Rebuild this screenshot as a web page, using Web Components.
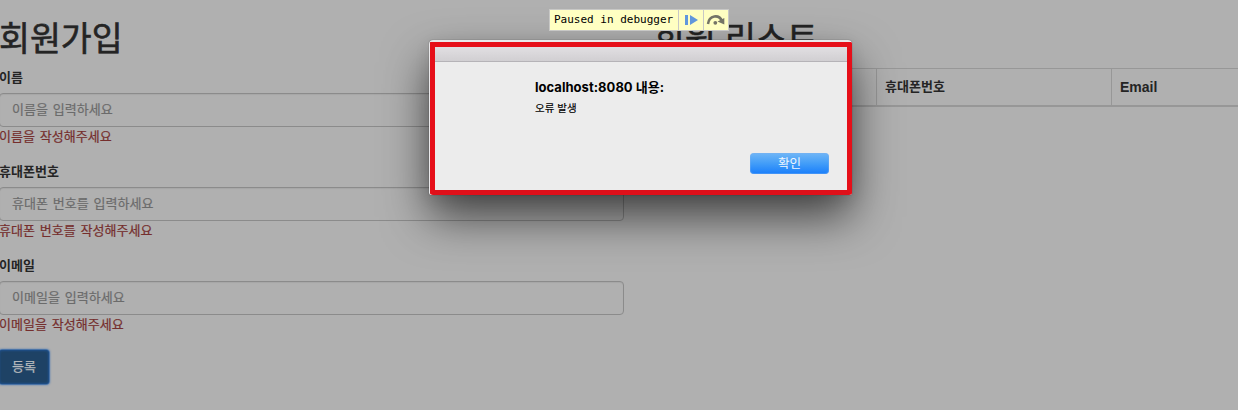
<!DOCTYPE html>
<html lang="ko">
<head>
<meta charset="utf-8">
<title>회원가입</title>
<style>
html,body{margin:0;height:100%;overflow:hidden;background:#b0b0b0}
body{font:13px/20px "Liberation Sans","Noto Sans CJK KR",sans-serif;color:#242424}
</style>
</head>
<body>
<member-page></member-page>
<script>
function define(name, html) {
  const t = document.createElement('template');
  t.innerHTML = html;
  customElements.define(name, class extends HTMLElement {
    constructor() {
      super();
      this.attachShadow({mode: 'open'}).appendChild(t.content.cloneNode(true));
    }
  });
}

define('page-heading', `<style>
:host{display:block;padding-top:20px;margin-bottom:8px}
h1{margin:0;font-weight:400;font-size:33.6px;line-height:40px;white-space:nowrap;color:#242424;-webkit-text-stroke:.6px #242424}
</style><h1><slot></slot></h1>`);

define('form-field', `<style>
:host{display:block;margin-bottom:15px}
.label{font-weight:700;line-height:20px;margin-bottom:5px;letter-spacing:.05px}
.box{box-sizing:border-box;height:34px;border:1px solid #8b8b8b;border-radius:4px;padding:6px 12px;color:#6b6b6b;box-shadow:inset 0 1px 1px rgba(0,0,0,.06);line-height:20px}
.error{color:#752e2d;line-height:20px}
.box,.error{letter-spacing:.05px;word-spacing:1px;-webkit-text-stroke:.2px currentColor}
</style><div class="label"><slot name="label"></slot></div><div class="box"><slot></slot></div><div class="error"><slot name="error"></slot></div>`);

define('submit-button', `<style>
:host{display:block}
button{display:block;box-sizing:border-box;width:50px;height:34px;margin:0;padding:0 0 2px;border:1px solid #1d4b80;border-radius:3px;background:#1e4265;color:#b5b9bd;font:13px/18px "Noto Sans CJK KR",sans-serif;-webkit-text-stroke:.25px #b5b9bd;box-shadow:0 0 0 .5px #31639d,0 0 2px 1px #4877b2,inset 0 0 2px #20528a}
</style><button><slot></slot></button>`);

define('member-table', `<style>
:host{display:grid;grid-template-columns:223px 235px 168px;box-sizing:border-box;height:39px;border-top:1px solid #979797;border-bottom:2px solid #979797}
div{border-right:1px solid #979797;padding:8px;font-weight:700;line-height:20px;letter-spacing:.05px}
.latin{font-size:14px;letter-spacing:0}
</style><div></div><div><slot name="phone"></slot></div><div class="latin"><slot name="email"></slot></div>`);

define('debugger-bar', `<style>
:host{display:flex;box-sizing:border-box;height:22px;border:1px solid #c8c8c6;background:#ffffc2;color:#000}
span{font:11px/20px "DejaVu Sans Mono",monospace;padding:0 4px;width:128px;box-sizing:border-box;white-space:nowrap}
i{display:flex;border-left:1px solid #c8c8c6;width:24px}
svg{display:block}
</style><span><slot></slot></span>
<i><svg width="24" height="20" viewBox="0 0 24 20"><path d="M6 5h3v10H6zM11 5l8 5-8 5z" fill="#6197dc"/></svg></i>
<i><svg width="24" height="20" viewBox="0 0 24 20"><path d="M4 14C5 5 15 4 18 11" fill="none" stroke="#747466" stroke-width="2.5"/><path d="M13.5 11.5l6.8-3.5 0 6.5z" fill="#747466"/><circle cx="11.3" cy="12.8" r="1.9" fill="#747466"/></svg></i>`);

define('alert-dialog', `<style>
:host{display:block;box-sizing:border-box;width:423px;height:155px;padding-top:2px;border-radius:4px 4px 2px 2px;background:#e9e9eb;color:#000;box-shadow:0 0 1px rgba(0,0,0,.65),0 22px 46px rgba(0,0,0,.62),0 4px 16px rgba(0,0,0,.08)}
.frame{box-sizing:border-box;height:153px;margin-left:1px;border:5px solid #e60f19;border-bottom-color:#df101a;border-radius:1px 2px 3px 3px;background:#ececec;display:flex;flex-direction:column}
.bar{height:14px;flex:none;border-bottom:1px solid #b5b3b7;background:linear-gradient(#e1dfe2,#d1cfd2)}
.body{flex:1;display:flex;flex-direction:column;padding:15px 18px 16px 100px;white-space:nowrap}
b{font:700 13px/20px Inter,"Noto Sans CJK KR",sans-serif;letter-spacing:.03px}
p{margin:2px 0 0;font:10.5px/18px "Noto Sans CJK KR",sans-serif;-webkit-text-stroke:.15px #000}
button{align-self:flex-end;margin:auto 0 0;padding:0 0 1px;width:79px;height:21px;border:0;border-radius:4px;background:linear-gradient(#70b6f6,#429df8 50%,#197efb);box-shadow:inset 0 0 0 1px rgba(120,175,240,.4);color:#eff7ff;font:12.5px/18px "Noto Sans CJK KR",sans-serif}
</style><div class="frame"><div class="bar"></div><div class="body"><b><slot name="title"></slot></b><p><slot></slot></p><button><slot name="action"></slot></button></div></div>`);

define('member-page', `<style>
:host{display:block;position:relative;height:410px;overflow:hidden}
main{display:grid;grid-template-columns:625px 626px;column-gap:30px;margin-left:-1px}
alert-dialog{position:absolute;left:429px;top:40px}
debugger-bar{position:absolute;left:549px;top:9px}
</style>
<main>
<section>
<page-heading>회원가입</page-heading>
<form-field><span slot="label">이름</span>이름을 입력하세요<span slot="error">이름을 작성해주세요</span></form-field>
<form-field><span slot="label">휴대폰번호</span>휴대폰 번호를 입력하세요<span slot="error">휴대폰 번호를 작성해주세요</span></form-field>
<form-field><span slot="label">이메일</span>이메일을 입력하세요<span slot="error">이메일을 작성해주세요</span></form-field>
<submit-button>등록</submit-button>
</section>
<section>
<page-heading>회원 리스트</page-heading>
<member-table><span slot="phone">휴대폰번호</span><span slot="email">Email</span></member-table>
</section>
</main>
<alert-dialog><span slot="title">localhost:8080 내용:</span>오류 발생<span slot="action">확인</span></alert-dialog>
<debugger-bar>Paused in debugger</debugger-bar>`);
</script>
</body>
</html>
